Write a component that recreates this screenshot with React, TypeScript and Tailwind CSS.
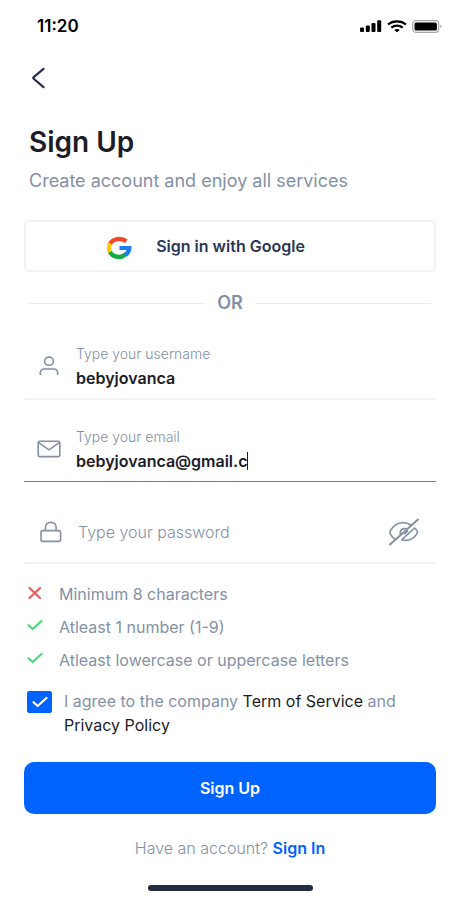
import React, { useState } from "react";

function StatusBar() {
  return (
    <header className="flex h-12 items-center justify-between pt-1 pr-[18px] pl-[37px]">
      <time className="text-[17px] leading-6 font-semibold text-black">11:20</time>
      <div className="flex items-center gap-[5px] text-black">
        <svg width="22" height="13" viewBox="0 0 22 13" fill="currentColor" aria-hidden="true">
          <rect x="0" y="7.500" width="4" height="4.500" rx="1" />
          <rect x="5.800" y="5.500" width="4" height="6.500" rx="1" />
          <rect x="11.500" y="3" width="4" height="9" rx="1" />
          <rect x="17.200" y="0.300" width="4" height="11.700" rx="1" />
        </svg>
        <svg width="20" height="13" viewBox="0 0 20 13" fill="none" stroke="currentColor" strokeWidth="2.200" aria-hidden="true">
          <path d="M1 4.500C6 .2 14 .2 19 4.500" />
          <path d="M4.300 7.700C7.500 5 12.500 5 15.700 7.700" />
          <path d="M10 12.300 7.200 10C8.900 8.700 11.100 8.700 12.800 10Z" fill="currentColor" stroke="none" />
        </svg>
        <svg width="30" height="13" viewBox="0 0 30 13" aria-hidden="true">
          <rect x=".7" y=".7" width="26" height="11.600" rx="3" fill="none" stroke="#a8a8a8" strokeWidth="1.200" />
          <rect x="2.500" y="2.500" width="22.400" height="8" rx="1.500" fill="currentColor" />
          <path d="M28.300 4.500c1.600.8 1.600 3.200 0 4Z" fill="#a8a8a8" />
        </svg>
      </div>
    </header>
  );
}

function GoogleLogo() {
  return (
    <svg className="mt-1" width="26" height="24" viewBox="0 0 26 24" fill="none" strokeWidth="4.400" aria-hidden="true">
      <path d="M4 8C6.800 2.500 15.500 1.500 20.400 5.300" stroke="#f04a2a" />
      <path d="M4.300 7.500C2.600 10.300 2.600 13.700 4.300 16.500" stroke="#fbca05" />
      <path d="M4 16C7.300 21.800 15.500 22.200 19.600 18.400" stroke="#12ac46" />
      <path d="M13.500 9.900H25.400C25.800 14.400 24.200 17.900 21.200 20.300L17.300 17.400C19.100 16.500 20.100 15.300 20.500 14H13.500Z" fill="#1b7ceb" />
    </svg>
  );
}

function UserIcon() {
  return (
    <svg width="20" height="20" viewBox="0 0 20 20" fill="none" stroke="currentColor" strokeWidth="1.600" aria-hidden="true">
      <ellipse cx="10" cy="5.200" rx="4.400" ry="4.100" />
      <path d="M1.300 19v-1.800c0-2.600 1.600-4.200 4.200-4.200h9c2.600 0 4.200 1.600 4.200 4.200V19" />
    </svg>
  );
}

function MailIcon() {
  return (
    <svg width="24" height="18" viewBox="0 0 24 18" fill="none" stroke="currentColor" strokeWidth="1.600" strokeLinejoin="round" aria-hidden="true">
      <rect x="1.200" y="1.200" width="21.600" height="15.400" rx="1.600" />
      <path d="M1.700 2.700 12 9.800 22.300 2.700" />
    </svg>
  );
}

function LockIcon() {
  return (
    <svg width="22" height="22" viewBox="0 0 22 22" fill="none" stroke="currentColor" strokeWidth="1.600" aria-hidden="true">
      <rect x="1" y="9.600" width="19.600" height="10.800" rx="1.800" />
      <path d="M5.500 9.600V6.200C5.500 3.300 7.800 1.400 10.800 1.400S16.100 3.300 16.100 6.200V9.600" />
    </svg>
  );
}

function EyeOffIcon() {
  return (
    <svg width="32" height="28" viewBox="0 0 32 28" fill="none" stroke="currentColor" strokeWidth="1.700" strokeLinecap="round" strokeLinejoin="round" aria-hidden="true">
      <path d="M2 26.500 30 1.500" strokeWidth="2" />
      <path d="M7.200 21.500C5 19.800 3.300 17.900 2.300 15.800 1.900 14.900 1.900 13.500 2.300 12.700 7.600 4.100 16 2.700 23.400 7.200" />
      <path d="M26.500 10 29 12.700C29.600 13.400 29.600 14.500 29.100 15.400 25.500 21.200 19.900 23.500 13.700 21.800Z" />
      <path d="M12.600 16.500C11.300 13 14.200 9.500 18.300 11.100" />
      <path d="M16.600 15.600 19.600 13" />
    </svg>
  );
}

function Check({ className }: { className: string }) {
  return (
    <svg className={className} viewBox="0 0 16 12" fill="none" stroke="currentColor" strokeWidth="2.200" strokeLinecap="round" strokeLinejoin="round" aria-hidden="true">
      <path d="M1.500 6.200 5.700 10 14.500 2" />
    </svg>
  );
}

function Cross() {
  return (
    <svg className="mb-[3px] w-4 shrink-0 text-[#ee5a5a]" viewBox="0 0 16 14" fill="none" stroke="currentColor" strokeWidth="2.200" strokeLinecap="round" aria-hidden="true">
      <path d="M2.500 2 13 12M13 2 2.500 12" />
    </svg>
  );
}

const requirements = [
  { text: "Minimum 8 characters", met: false },
  { text: "Atleast 1 number (1-9)", met: true },
  { text: "Atleast lowercase or uppercase letters", met: true },
];

export default function App() {
  const [username, setUsername] = useState("bebyjovanca");
  const [email, setEmail] = useState("bebyjovanca@gmail.c");
  const [agreed, setAgreed] = useState(true);
  const [visible, setVisible] = useState(false);

  return (
    <div className="min-h-screen bg-white font-['Inter',sans-serif] text-[#8491a5]">
      <StatusBar />
      <main className="px-6">
        <button type="button" aria-label="Back" className="mt-4 flex h-7 w-7 items-center justify-center text-[#262d4f]">
          <svg width="14" height="22" viewBox="0 0 14 22" fill="none" stroke="currentColor" strokeWidth="2.200" strokeLinecap="round" strokeLinejoin="round" aria-hidden="true">
            <path d="M12.500 1.800 2.700 10.200Q1.800 11 2.700 11.800L12.500 20.200" />
          </svg>
        </button>

        <h1 className="mt-8 pl-[5px] text-[28px] leading-9 font-semibold text-[#1c1b26]">Sign Up</h1>
        <p className="mt-[9px] pl-[5px] text-lg leading-6">Create account and enjoy all services</p>

        <button type="button" className="mt-[27px] flex h-[52px] w-full items-center justify-center gap-6 rounded-[5px] border-2 border-[#f0f1f7] pr-[49px] text-base font-semibold text-[#2c3657]">
          <GoogleLogo />
          Sign in with Google
        </button>

        <div className="mt-[19px] flex h-6 items-center gap-3 px-[5px] text-lg leading-6 font-semibold">
          <span className="h-px flex-1 bg-[#e9edf3]" />
          OR
          <span className="h-px flex-1 bg-[#e9edf3]" />
        </div>

        <form onSubmit={(e) => e.preventDefault()}>
          <div className="mt-[27px] flex h-[58px] items-center gap-[17px] border-b-2 border-[#f1f2f7] pb-2 pl-[15px]">
            <UserIcon />
            <div className="min-w-0 flex-1">
              <label htmlFor="username" className="block text-sm leading-6 font-light">Type your username</label>
              <input id="username" value={username} onChange={(e) => setUsername(e.target.value)} className="block h-6 w-full text-base leading-6 font-semibold text-[#1c1b26] outline-none" />
            </div>
          </div>

          <div className="mt-6 flex h-[58px] items-center gap-[15px] border-b border-[#3f83ee] pb-2 pl-[13px]">
            <MailIcon />
            <div className="min-w-0 flex-1">
              <label htmlFor="email" className="block text-sm leading-6 font-light">Type your email</label>
              <div className="flex h-6 items-center">
                <input id="email" type="text" inputMode="email" value={email} onChange={(e) => setEmail(e.target.value)} className="field-sizing-content h-6 max-w-full text-base leading-6 font-semibold text-[#1c1b26] caret-transparent outline-none" />
                <span className="h-[18px] w-px bg-[#1c1b26]" />
              </div>
            </div>
          </div>

          <div className="mt-6 flex h-[58px] items-center gap-4 border-b-2 border-[#f1f2f7] pr-4 pb-1 pl-4">
            <LockIcon />
            <input type={visible ? "text" : "password"} aria-label="Password" placeholder="Type your password" className="h-8 min-w-0 flex-1 text-base font-light outline-none placeholder:text-[#8491a5]" />
            <button type="button" aria-label="Toggle password visibility" onClick={() => setVisible(!visible)}>
              <EyeOffIcon />
            </button>
          </div>

          <ul className="mt-[18px] flex flex-col gap-[9px] pl-[3px] text-base leading-6">
            {requirements.map((r) => (
              <li key={r.text} className="flex items-center gap-4">
                {r.met ? <Check className="mb-1 w-4 shrink-0 text-[#4bd97b]" /> : <Cross />}
                {r.text}
              </li>
            ))}
          </ul>

          <div className="mt-[17px] flex items-start gap-3 pl-[3px] text-base leading-6">
            <span className="mt-[2px] grid shrink-0 place-items-center">
              <input id="agree" type="checkbox" checked={agreed} onChange={(e) => setAgreed(e.target.checked)} className="peer col-start-1 row-start-1 h-[22px] w-[25px] appearance-none rounded-xs border border-[#0062ff] checked:bg-[#0062ff]" />
              <Check className="pointer-events-none invisible col-start-1 row-start-1 w-4 text-white peer-checked:visible" />
            </span>
            <label htmlFor="agree">
              I agree to the company <a href="#terms" className="text-[#1c1b26]">Term of Service</a> and
              <br />
              <a href="#privacy" className="text-[#1c1b26]">Privacy Policy</a>
            </label>
          </div>

          <button type="submit" className="mt-[25px] h-[52px] w-full rounded-[10px] bg-[#0062ff] text-base font-semibold text-white">Sign Up</button>
        </form>

        <p className="mt-[22px] text-center text-base leading-6 font-light">
          Have an account? <a href="#signin" className="font-semibold text-[#0062ff]">Sign In</a>
        </p>
      </main>
      <div className="mx-auto mt-[25px] h-[6px] w-[165px] rounded-full bg-[#242a42]" />
    </div>
  );
}
